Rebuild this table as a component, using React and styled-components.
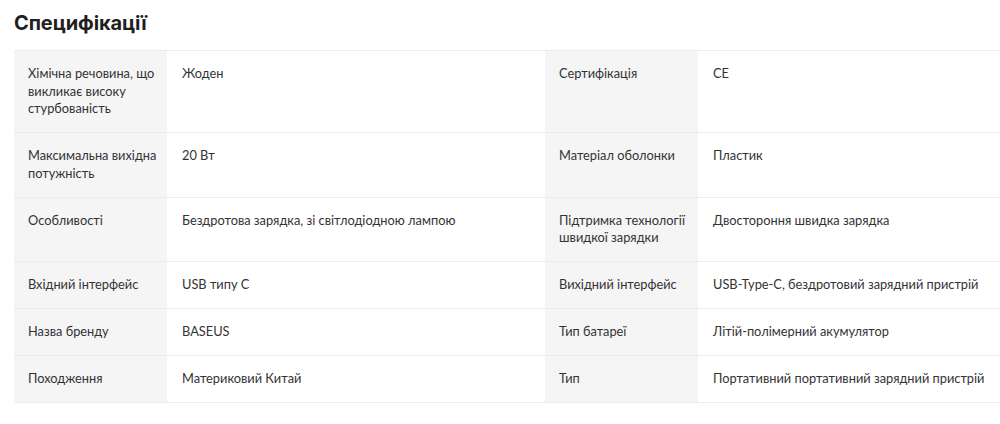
import React from 'react';
import styled, { createGlobalStyle } from 'styled-components';

const GlobalStyle = createGlobalStyle`
  html, body {
    margin: 0;
    padding: 0;
    background: #ffffff;
    overflow: hidden;
  }
  body {
    font-family: Lato, "Noto Sans", "Liberation Sans", sans-serif;
    color: #333;
  }
`;

// two specs per row: [label, value, label, value]
const specs = [
  ['Хімічна речовина, що викликає високу стурбованість', 'Жоден', 'Сертифікація', 'CE'],
  ['Максимальна вихідна потужність', '20 Вт', 'Матеріал оболонки', 'Пластик'],
  ['Особливості', 'Бездротова зарядка, зі світлодіодною лампою', 'Підтримка технології швидкої зарядки', 'Двостороння швидка зарядка'],
  ['Вхідний інтерфейс', 'USB типу C', 'Вихідний інтерфейс', 'USB-Type-C, бездротовий зарядний пристрій'],
  ['Назва бренду', 'BASEUS', 'Тип батареї', 'Літій-полімерний акумулятор'],
  ['Походження', 'Материковий Китай', 'Тип', 'Портативний портативний зарядний пристрій'],
];

const App = () => {
  return (
    <Page>
      <GlobalStyle />
      <Title>Специфікації</Title>
      <SpecTable>
        {specs.map((row, i) => (
          <Row key={i}>
            <Cell $label>{row[0]}</Cell>
            <Cell>{row[1]}</Cell>
            <Cell $label>{row[2]}</Cell>
            <Cell>{row[3]}</Cell>
          </Row>
        ))}
      </SpecTable>
    </Page>
  );
};

const Page = styled.div`
  padding: 8px 0 0 14px;
  width: 986px;
`;

const Title = styled.h2`
  margin: 0 0 12px;
  font-family: Inter, "Noto Sans", sans-serif;
  font-size: 20px;
  line-height: 30px;
  font-weight: 700;
  color: #1f1f1f;
  letter-spacing: -0.1px;
`;

const SpecTable = styled.div`
  border-top: 1px solid #ececec;
`;

const Row = styled.div`
  display: grid;
  grid-template-columns: 153px 378px 153px 302px;
  border-bottom: 1px solid #ececec;
`;

const Cell = styled.div`
  padding: 14px 8px 14.5px ${(p) => (p.$label ? '14px' : '15px')};
  background: ${(p) => (p.$label ? '#f5f5f5' : '#ffffff')};
  font-size: 12.8px;
  line-height: 17.5px;
  color: #333;
`;

export default App;
